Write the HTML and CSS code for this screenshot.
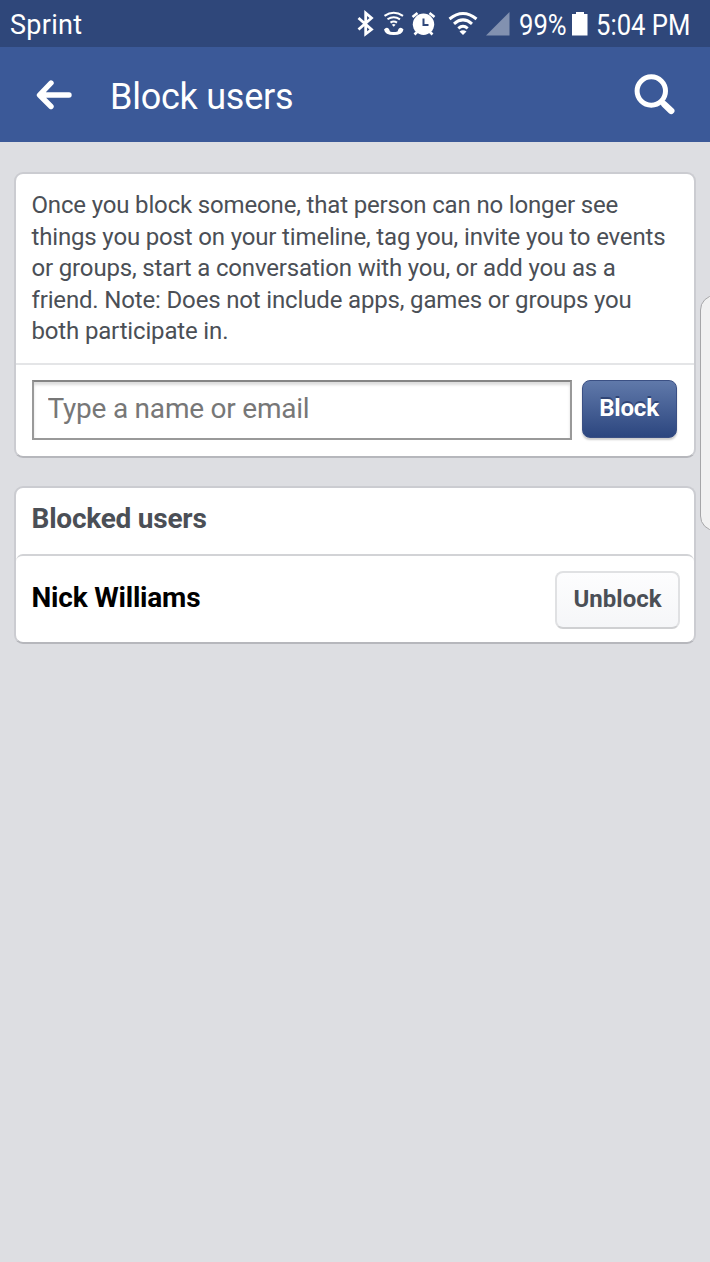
FILE: index.html
```html
<!DOCTYPE html>
<html lang="en">
<head>
<meta charset="utf-8">
<title>Block users</title>
<link rel="stylesheet" href="styles.css">
</head>
<body>
<div class="status">
  <span class="carrier">Sprint</span>
  <svg class="status-icons" width="160" height="47" viewBox="350 0 160 47" fill="none" stroke="#fff">
    <path d="M358.500 18 371.500 29.500 365.700 34V13L371.500 18 358.500 29.500" stroke-width="2.800"/>
    <path d="M384.500 15.800Q393.700 9.500 403 15.800M387.500 19.300Q393.700 15 400 19.300M390.500 22.600Q393.700 20.200 397 22.600" stroke-width="2"/>
    <path d="M391.800 24.800Q393.700 23.300 395.600 24.800L393.700 26.700Z" fill="#fff" stroke="none"/>
    <path d="M384 29.500Q386.500 26.500 389 29L390 31.500Q393.700 32.700 397.500 31.500L398.500 29Q401 26.500 403.500 29.500 402.500 35 393.700 35 385 35 384 29.500Z" fill="#fff" stroke="none"/>
    <circle cx="423.500" cy="24.300" r="10.700" fill="#fff" stroke="none"/>
    <path d="M412.500 17 417.500 13M434.500 17 429.500 13M417.500 31.500 414.500 34.500M429.500 31.500 432.500 34.500" stroke-width="2.600"/>
    <path d="M423.500 18.500V25H428.500" stroke="#2f477a" stroke-width="2"/>
    <path d="M449.500 19Q463 8 476.500 19M454 23.800Q463 16 472 23.800M458.300 28.300Q463 24.300 467.700 28.300" stroke-width="3"/>
    <path d="M459.500 31.500Q463 29 466.500 31.500L463 35Z" fill="#fff" stroke="none"/>
    <path d="M509.500 12V35.500H486Z" fill="#8291b0" stroke="none"/>
  </svg>
  <span class="percent"><span class="condensed">99%</span></span>
  <svg class="battery" width="16" height="24" viewBox="0 0 16 24"><path d="M4 0H12V2H15.500V23.500H0V2H4Z" fill="#fff"/></svg>
  <span class="clock"><span class="condensed">5:04 PM</span></span>
</div>
<header class="bar">
  <svg width="36" height="30" viewBox="0 0 36 30" fill="none" stroke="#fff" stroke-width="5.400" stroke-linecap="round" stroke-linejoin="round"><path d="M15 3 3.500 15 15 26.500M4.500 15H33"/></svg>
  <h1 class="title">Block users</h1>
  <svg class="search" width="44" height="44" viewBox="0 0 44 44" fill="none" stroke="#fff"><circle cx="18.300" cy="18" r="14.200" stroke-width="5"/><path d="M28 28 31 31" stroke-width="5"/><path d="M31.500 31.500 38.200 37.800" stroke-width="6.500" stroke-linecap="round"/></svg>
</header>
<main class="content">
  <section class="card">
    <p class="info">Once you block someone, that person can no longer see<br>things you post on your timeline, tag you, invite you to events<br>or groups, start a conversation with you, or add you as a<br>friend. Note: Does not include apps, games or groups you<br>both participate in.</p>
    <form class="form">
      <input class="field" type="text" placeholder="Type a name or email">
      <button class="btn primary" type="button">Block</button>
    </form>
  </section>
  <section class="card blocked">
    <h2 class="heading">Blocked users</h2>
    <div class="user">
      <span class="name">Nick Williams</span>
      <button class="btn secondary" type="button">Unblock</button>
    </div>
  </section>
</main>
<div class="edge-handle"></div>
</body>
</html>
```
FILE: styles.css
```css
* { box-sizing: border-box; }
body {
  margin: 0;
  height: 1262px;
  position: relative;
  overflow: hidden;
  background: #dddee2;
  font-family: Roboto, sans-serif;
}
.status {
  height: 47px;
  display: flex;
  align-items: center;
  padding-left: 10px;
  background: #2f477a;
  color: #fff;
  white-space: nowrap;
}
.carrier { width: 340px; font-size: 27px; letter-spacing: .3px; padding-top: 2px; }
.status-icons { flex: none; }
.percent { width: 53px; margin-left: 9px; font-size: 29px; padding-top: 2px; }
.battery { flex: none; }
.clock { width: 98px; margin-left: 8px; font-size: 29px; padding-top: 2px; }
.condensed { display: inline-block; transform: scaleX(.885); transform-origin: left; }
.bar {
  height: 95px;
  display: flex;
  align-items: center;
  padding: 0 33px 0 36px;
  background: #3b5998;
  color: #fff;
}
.title { margin: 4px 0 0 38px; font-size: 36px; font-weight: 400; letter-spacing: -.25px; }
.search { margin-left: auto; }
.content { padding: 30px 14px; }
.card {
  height: 286px;
  border: 2px solid #cbccd1;
  border-bottom-color: #b6b7bc;
  border-radius: 9px;
  background: #fff;
}
.info {
  height: 191px;
  margin: 0;
  padding: 16px 0 0 15.500px;
  border-bottom: 2px solid #e4e5e7;
  color: #4b4f56;
  font-size: 24px;
  line-height: 31.6px;
  letter-spacing: -.16px;
  white-space: nowrap;
}
.form { display: flex; gap: 10px; padding: 15px 16px 15px 15.500px; }
.field {
  width: 540px;
  height: 60px;
  padding: 0 14px 3px;
  border: 2px solid #999;
  border-top-color: #858585;
  border-radius: 0;
  box-shadow: inset 0 3px 3px #ddd;
  font: 28px Roboto, sans-serif;
  letter-spacing: -.22px;
}
.field::placeholder { color: #777; opacity: 1; }
.btn { border-radius: 8px; padding: 0; font: bold 24px Roboto, sans-serif; letter-spacing: -.2px; }
.primary {
  width: 95px;
  height: 58px;
  padding-bottom: 3px;
  border: 1px solid #3b5084;
  background: linear-gradient(#6079aa, #2c467f);
  box-shadow: 0 2px 2px #ccc;
  color: #fff;
  text-shadow: 0 -2px 0 #304575;
}
.blocked { height: 158px; margin-top: 28px; }
.heading {
  height: 66px;
  margin: 0;
  padding: 14px 15.500px;
  color: #4b4f56;
  font-size: 28px;
  line-height: 34px;
  letter-spacing: -.23px;
}
.user {
  height: 88px;
  display: flex;
  justify-content: space-between;
  padding: 15px 14px 0 15.500px;
  border-top: 2px solid #d2d3d6;
  border-radius: 7px 7px 0 0;
}
.name { font-size: 28px; font-weight: bold; line-height: 54px; letter-spacing: -.2px; }
.secondary {
  width: 125px;
  height: 58px;
  padding-bottom: 2px;
  border: 2px solid #e0e1e3;
  border-bottom-color: #cfd0d2;
  background: linear-gradient(#fdfdfe, #f5f6f8);
  color: #4b4f56;
  letter-spacing: 0;
}
.edge-handle {
  position: absolute;
  top: 295px;
  left: 700px;
  width: 30px;
  height: 236px;
  border: 1.500px solid #a6a6a8;
  border-radius: 15px;
  background: #f1f1f1;
}
```
